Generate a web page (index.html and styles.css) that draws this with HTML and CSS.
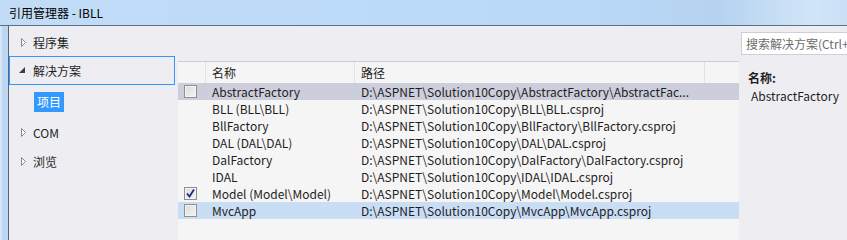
FILE: index.html
```html
<!DOCTYPE html>
<html lang="zh">
<head>
<meta charset="utf-8">
<title>引用管理器 - IBLL</title>
<link rel="stylesheet" href="styles.css">
</head>
<body>
<div class="window">
  <div class="titlebar"><span class="title">引用管理器 - IBLL</span></div>
  <div class="body">
    <div class="frame-left"></div>
    <div class="content">
      <nav class="nav">
        <div class="nav-item n1"><svg class="tri" width="6" height="9" viewBox="0 0 6 9"><path d="M0.5 0.5 L4.5 4.5 L0.5 8.5 Z" fill="#fff" stroke="#8a8a8a"/></svg><span>程序集</span></div>
        <div class="nav-item n2 selected"><svg class="tri open" width="7" height="7" viewBox="0 0 7 7"><path d="M6 0 L6 6 L0 6 Z" fill="#3c3c3c"/></svg><span>解决方案</span></div>
        <div class="nav-item n3 sub"><span class="hl">项目</span></div>
        <div class="nav-item n4"><svg class="tri" width="6" height="9" viewBox="0 0 6 9"><path d="M0.5 0.5 L4.5 4.5 L0.5 8.5 Z" fill="#fff" stroke="#8a8a8a"/></svg><span>COM</span></div>
        <div class="nav-item n5"><svg class="tri" width="6" height="9" viewBox="0 0 6 9"><path d="M0.5 0.5 L4.5 4.5 L0.5 8.5 Z" fill="#fff" stroke="#8a8a8a"/></svg><span>浏览</span></div>
      </nav>
      <div class="right">
        <div class="toolbar">
          <div class="search">搜索解决方案(Ctrl+E)</div>
        </div>
        <div class="panes">
          <div class="table">
            <div class="row head">
              <div class="c-chk"></div>
              <div class="c-name">名称</div>
              <div class="c-path">路径</div>
              <div class="c-extra"></div>
            </div>
            <div class="row sel">
              <div class="c-chk"><span class="chk"></span></div>
              <div class="c-name">AbstractFactory</div>
              <div class="c-path">D:\ASPNET\Solution10Copy\AbstractFactory\AbstractFac...</div>
            </div>
            <div class="row">
              <div class="c-chk"></div>
              <div class="c-name">BLL (BLL\BLL)</div>
              <div class="c-path">D:\ASPNET\Solution10Copy\BLL\BLL.csproj</div>
            </div>
            <div class="row">
              <div class="c-chk"></div>
              <div class="c-name">BllFactory</div>
              <div class="c-path">D:\ASPNET\Solution10Copy\BllFactory\BllFactory.csproj</div>
            </div>
            <div class="row">
              <div class="c-chk"></div>
              <div class="c-name">DAL (DAL\DAL)</div>
              <div class="c-path">D:\ASPNET\Solution10Copy\DAL\DAL.csproj</div>
            </div>
            <div class="row">
              <div class="c-chk"></div>
              <div class="c-name">DalFactory</div>
              <div class="c-path">D:\ASPNET\Solution10Copy\DalFactory\DalFactory.csproj</div>
            </div>
            <div class="row">
              <div class="c-chk"></div>
              <div class="c-name">IDAL</div>
              <div class="c-path">D:\ASPNET\Solution10Copy\IDAL\IDAL.csproj</div>
            </div>
            <div class="row">
              <div class="c-chk"><span class="chk"><svg width="11" height="11" viewBox="0 0 11 11"><path d="M2 5.5 L4.5 8.5 L9 1.5" fill="none" stroke="#1f2a7c" stroke-width="1.8"/></svg></span></div>
              <div class="c-name">Model (Model\Model)</div>
              <div class="c-path">D:\ASPNET\Solution10Copy\Model\Model.csproj</div>
            </div>
            <div class="row hover">
              <div class="c-chk"><span class="chk"></span></div>
              <div class="c-name">MvcApp</div>
              <div class="c-path">D:\ASPNET\Solution10Copy\MvcApp\MvcApp.csproj</div>
            </div>
          </div>
          <aside class="details">
            <div class="d-label">名称:</div>
            <div class="d-value">AbstractFactory</div>
          </aside>
        </div>
      </div>
    </div>
  </div>
</div>
</body>
</html>
```

FILE: styles.css
```css
* { box-sizing: border-box; }
html, body { margin: 0; padding: 0; }
body {
  width: 847px;
  height: 240px;
  overflow: hidden;
  font-family: "Noto Sans CJK SC", "Noto Sans", sans-serif;
  font-size: 12px;
  color: #1e1e1e;
}
.window {
  width: 847px;
  height: 240px;
  display: flex;
  flex-direction: column;
}
.titlebar {
  height: 26px;
  flex: none;
  border-bottom: 1px solid #5d6f85;
  background: linear-gradient(90deg, #c2dcf6 0%, #bcdaf9 40%, #b9d8f8 70%, #b5d3f0 85%, #d2e5f8 96%, #c9dff5 100%);
  display: flex;
  align-items: center;
  padding-left: 9px;
}
.title { color: #000; font-size: 12px; line-height: 1; }
.body {
  flex: 1;
  display: flex;
  min-height: 0;
}
.frame-left {
  width: 9px;
  flex: none;
  background: linear-gradient(90deg, #d6e6f6 0, #d6e6f6 2px, #bdd7f2 2px, #bdd7f2 8px);
  border-right: 1px solid #53657b;
}
.content {
  flex: 1;
  display: flex;
  background: #eeeef2;
}
.nav {
  width: 166px;
  flex: none;
  padding-top: 2px;
  display: flex;
  flex-direction: column;
}
.nav-item {
  height: 29px;
  flex: none;
  display: flex;
  align-items: center;
  padding-left: 11px;
  border: 1px solid transparent;
}
.nav-item.n1 { height: 28px; }
.nav-item.n2 { height: 29px; }
.nav-item.n3 { height: 33px; }
.nav-item.n4 { height: 28px; }
.nav-item.n5 { height: 30px; }
.nav-item span { margin-left: 6px; }
.nav-item .tri { flex: none; }
.nav-item .tri.open { margin-left: -2px; width: 7px; }
.nav-item.selected { border-color: #3399ff; }
.nav-item.selected span { margin-left: 7px; }
.nav-item.sub { padding-left: 24px; }
.nav-item.sub .hl {
  margin-left: 0;
  background: #3399ff;
  color: #fff;
  height: 20px;
  line-height: 20px;
  padding: 0 3px;
}
.right {
  flex: 1;
  display: flex;
  flex-direction: column;
  margin-left: 3px;
}
.toolbar {
  height: 35px;
  flex: none;
  display: flex;
  justify-content: flex-end;
  padding-top: 6px;
}
.search {
  width: 106px;
  height: 23px;
  background: #fff;
  border: 1px solid #cccedb;
  border-right: none;
  color: #6d6d6d;
  padding-left: 4px;
  line-height: 21px;
  white-space: nowrap;
  overflow: hidden;
}
.panes {
  flex: 1;
  display: flex;
}
.table {
  width: 561px;
  flex: none;
  background: #f5f5f5;
  border-top: 1px solid #cccedb;
}
.row {
  height: 17px;
  display: flex;
  align-items: center;
  white-space: nowrap;
}
.row.head {
  height: 21px;
}
.row.head > div {
  height: 21px;
  display: flex;
  align-items: center;
  border-right: 1px solid #e2e2e6;
}
.c-chk { width: 28px; flex: none; padding-left: 6px; display: flex; align-items: center; }
.c-name { width: 149px; flex: none; padding-left: 6px; }
.c-path { width: 350px; flex: none; padding-left: 6px; overflow: hidden; }
.c-extra { flex: 1; border-right: none !important; }
.row.sel { background: #cccedb; }
.row.hover { background: #c9ddf5; }
.chk {
  width: 13px;
  height: 13px;
  border: 1px solid #8e8f8f;
  background: linear-gradient(135deg, #dcdcdc 0%, #f4f4f4 100%);
  box-shadow: inset 0 0 0 1px #f4f4f4;
  display: flex;
  align-items: center;
  justify-content: center;
}
.details {
  flex: 1;
  padding-left: 9px;
  padding-top: 8px;
}
.d-label { font-weight: bold; line-height: 17px; }
.d-value { padding-left: 3px; line-height: 17px; margin-top: 1px; }
```
